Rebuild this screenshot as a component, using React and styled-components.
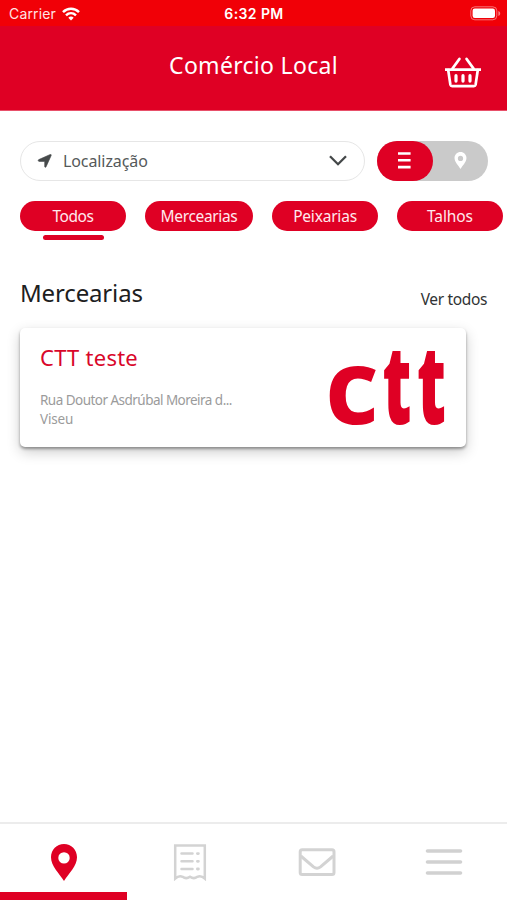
import React from 'react';
import styled, { createGlobalStyle } from 'styled-components';

const RED = '#df0024';

const categories = [
  { name: 'Todos', width: 106, spacing: '-0.4px', active: true },
  { name: 'Mercearias', width: 108, spacing: '-0.35px' },
  { name: 'Peixarias', width: 106, spacing: '-0.2px' },
  { name: 'Talhos', width: 106, spacing: '-0.1px' },
];

const WifiIcon = () => (
  <svg width="18" height="14" viewBox="0 0 18 14" fill="none" stroke="#fff" strokeWidth="2.5">
    <path d="M1 5.1C5.5.7 12.5.7 17 5.1" />
    <path d="M4 8.3c2.9-2.7 7.1-2.7 10 0" />
    <path d="M6.3 10.7c1.6-1.5 3.8-1.5 5.4 0L9 13.6z" fill="#fff" stroke="none" />
  </svg>
);

const BatteryIcon = () => (
  <svg width="31" height="15" viewBox="0 0 31 15">
    <rect x="0.8" y="0.8" width="26" height="13" rx="4" fill="none" stroke="#fff" strokeOpacity="0.45" />
    <rect x="2.6" y="2.6" width="22.4" height="9.4" rx="2.2" fill="#fff" />
    <path d="M28.4 5c2.4.8 2.4 4.2 0 5z" fill="#fff" fillOpacity="0.5" />
  </svg>
);

const BasketIcon = () => (
  <svg width="38" height="32" viewBox="0 0 38 32" fill="none" stroke="#fff" strokeLinecap="round">
    <path d="M1 12.6h36" strokeWidth="2.8" strokeLinecap="butt" />
    <path d="M4.2 13l2.2 14.8a1.8 1.8 0 0 0 1.8 1.4h21.6a1.8 1.8 0 0 0 1.8-1.4L33.8 13" strokeWidth="2.7" />
    <path d="M8.5 11.5L15.4 2M29.5 11.5L22.6 2" strokeWidth="2.8" />
    <path d="M12 18.7v5.4M19 18.7v5.4M26 18.7v5.4" strokeWidth="3.2" />
  </svg>
);

const ArrowIcon = () => (
  <svg width="15" height="14" viewBox="0 0 15 14">
    <path
      d="M13.2.5C13.9.2 14.5.7 14.2 1.4L9 12.9c-.4.7-1.3.5-1.3-.3V7.4H2.2C1 7.4.8 6.1 1.8 5.6z"
      fill="#464a4b"
      stroke="#464a4b"
      strokeWidth="0.6"
    />
  </svg>
);

const ChevronIcon = () => (
  <svg width="18" height="11" viewBox="0 0 18 11" fill="none" stroke="#444849" strokeWidth="2.3">
    <path d="M1 1.2l8 8 8-8" />
  </svg>
);

const ListIcon = () => (
  <svg width="13" height="17" viewBox="0 0 13 17" fill="none" stroke="#fff" strokeWidth="2.6">
    <path d="M0 1.5h12.6M0 8.3h12.6M0 15.1h12.6" />
  </svg>
);

const PinIcon = ({ width, height, color }) => (
  <svg width={width} height={height} viewBox="0 0 26 37">
    <path
      fill={color}
      fillRule="evenodd"
      d="M13 0C5.7 0 0 5.8 0 13.2 0 22 8.5 29.5 13 37c4.5-7.5 13-15 13-23.8C26 5.8 20.3 0 13 0zm0 8.2a5.7 5.7 0 1 1 0 11.4 5.7 5.7 0 0 1 0-11.4z"
    />
  </svg>
);

const ReceiptIcon = () => (
  <svg width="34" height="38" viewBox="0 0 34 38" fill="none" stroke="#d3d3d3" strokeWidth="2.5">
    <path d="M2.2 35.5V2.4h29.6v33.1q-3.8-3.4-7.5-1.7Q21 36.5 17 33.8 13 36.5 9.7 33.8q-3.7-1.7-7.5 1.7z" />
    <path d="M8.5 10.6h11M8.5 18.3h11M8.5 26h11" strokeLinecap="round" />
    <path d="M24.4 10.6h1M24.4 18.3h1M24.4 26h1" strokeLinecap="round" strokeWidth="2.8" />
  </svg>
);

const MailIcon = () => (
  <svg width="38" height="28" viewBox="0 0 38 28" fill="none" stroke="#d3d3d3" strokeWidth="3">
    <rect x="2.2" y="1.8" width="33.8" height="24.6" rx="2" />
    <path d="M2.8 8l12.7 10.9q3.5 2.8 7 0L35.2 8" />
  </svg>
);

const MenuIcon = () => (
  <svg width="38" height="28" viewBox="0 0 38 28" fill="none" stroke="#d1d1d1" strokeWidth="3.6" strokeLinecap="round">
    <path d="M2.5 3h33M2.5 14h33M2.5 25h33" />
  </svg>
);

// the t is much narrower than the c in this wordmark
const StoreLogo = () => (
  <LogoDrawing width="118" height="82" viewBox="0 0 118 82">
    <text y="78">
      <tspan x="-4" textLength="54" lengthAdjust="spacingAndGlyphs">c</tspan>
      <LogoNarrow x="53.5" textLength="29" lengthAdjust="spacingAndGlyphs">t</LogoNarrow>
      <LogoNarrow x="88" textLength="29" lengthAdjust="spacingAndGlyphs">t</LogoNarrow>
    </text>
  </LogoDrawing>
);

const App = () => {
  return (
    <Screen>
      <GlobalStyle />
      <StatusBar>
        <Carrier>Carrier <WifiIcon /></Carrier>
        <Clock>6:32 PM</Clock>
        <Battery><BatteryIcon /></Battery>
      </StatusBar>
      <Header>
        <HeaderTitle>Comércio Local</HeaderTitle>
        <BasketButton aria-label="Cesto"><BasketIcon /></BasketButton>
      </Header>

      <SearchRow>
        <LocationSelect>
          <ArrowIcon />
          <LocationLabel>Localização</LocationLabel>
          <ChevronIcon />
        </LocationSelect>
        <ViewToggle>
          <ToggleActive aria-label="Lista"><ListIcon /></ToggleActive>
          <ToggleOption aria-label="Mapa"><PinIcon width={13} height={17} color="#fff" /></ToggleOption>
        </ViewToggle>
      </SearchRow>

      <Categories>
        {categories.map((item) => (
          <Category key={item.name}>
            <Pill $width={item.width} $spacing={item.spacing}>{item.name}</Pill>
            {item.active && <Underline />}
          </Category>
        ))}
      </Categories>

      <SectionHeader>
        <SectionTitle>Mercearias</SectionTitle>
        <SeeAll>Ver todos</SeeAll>
      </SectionHeader>

      <StoreCard>
        <StoreInfo>
          <StoreName>CTT teste</StoreName>
          <Address>Rua Doutor Asdrúbal Moreira d...</Address>
          <City>Viseu</City>
        </StoreInfo>
        <StoreLogo />
      </StoreCard>

      <TabBar>
        <Tab $active aria-label="Locais"><PinIcon width={26} height={37} color={RED} /></Tab>
        <Tab aria-label="Encomendas"><ReceiptIcon /></Tab>
        <Tab aria-label="Mensagens"><MailIcon /></Tab>
        <Tab aria-label="Menu"><MenuIcon /></Tab>
      </TabBar>
    </Screen>
  );
};

export default App;

const GlobalStyle = createGlobalStyle`
  * {
    box-sizing: border-box;
  }

  body {
    margin: 0;
    background: #fff;
  }

  button {
    padding: 0;
    border: 0;
    background: none;
    font: inherit;
  }

  svg {
    display: block;
    flex: none;
  }
`;

const Screen = styled.div`
  display: flex;
  flex-direction: column;
  width: 507px;
  height: 900px;
  overflow: hidden;
  background: #fff;
  font-family: 'Noto Sans', sans-serif;
  white-space: nowrap;
`;

const StatusBar = styled.div`
  display: grid;
  grid-template-columns: 1fr auto 1fr;
  align-items: center;
  height: 26px;
  padding: 1px 6px 0 9px;
  background: #f10007;
  color: #fff;
  font-family: Inter, sans-serif;
  font-size: 14px;
`;

const Carrier = styled.div`
  display: flex;
  align-items: center;
  gap: 6px;
  color: #ffe4e4;
  letter-spacing: 0.15px;
`;

const Clock = styled.div`
  margin-right: 2px;
  font-weight: 600;
  letter-spacing: 0.4px;
`;

const Battery = styled.div`
  display: flex;
  justify-content: flex-end;
`;

const Header = styled.header`
  display: grid;
  grid-template-columns: 1fr auto 1fr;
  height: 85px;
  padding: 0 25px;
  background: ${RED};
  border-bottom: 1px solid #e8506a;
  color: #fff;
`;

const HeaderTitle = styled.h1`
  grid-column: 2;
  margin: 22px 0 0;
  font-size: 23px;
  font-weight: 400;
  line-height: 34px;
  letter-spacing: 0.3px;
`;

const BasketButton = styled.button`
  justify-self: end;
  align-self: start;
  margin-top: 31px;
`;

const SearchRow = styled.div`
  display: flex;
  gap: 12px;
  padding: 30px 19px 0 20px;
`;

const LocationSelect = styled.div`
  display: flex;
  align-items: center;
  width: 345px;
  height: 40px;
  padding: 0 17px 1px 16px;
  border: 1px solid #e6e6e6;
  border-radius: 20px;
`;

const LocationLabel = styled.span`
  flex: 1;
  margin: 1px 0 0 11px;
  color: #55595a;
  font-size: 16px;
  letter-spacing: -0.1px;
`;

const ViewToggle = styled.div`
  display: flex;
  width: 111px;
  height: 40px;
  border-radius: 20px;
  background: #cacaca;
`;

const ToggleOption = styled.button`
  display: flex;
  flex: 1;
  align-items: center;
  justify-content: center;
  padding-bottom: 2px;
`;

const ToggleActive = styled(ToggleOption)`
  border-radius: 20px;
  background: ${RED};
`;

const Categories = styled.div`
  display: flex;
  gap: 19px;
  height: 60px;
  padding: 20px 0 0 20px;
`;

const Category = styled.div`
  display: flex;
  flex: none;
  flex-direction: column;
  align-items: center;
`;

const Pill = styled.button`
  width: ${(props) => props.$width}px;
  height: 30px;
  border-radius: 15px;
  background: ${RED};
  color: #ffe9ed;
  font-size: 15.5px;
  line-height: 30px;
  letter-spacing: ${(props) => props.$spacing};
`;

const Underline = styled.div`
  width: 61px;
  height: 5px;
  margin-top: 4px;
  border-radius: 3px;
  background: ${RED};
`;

const SectionHeader = styled.div`
  display: flex;
  align-items: center;
  justify-content: space-between;
  padding: 34px 20px 0 20px;
`;

const SectionTitle = styled.h2`
  margin: 0;
  color: #1d2021;
  font-size: 24px;
  font-weight: 400;
  line-height: 36px;
  letter-spacing: -0.15px;
`;

const SeeAll = styled.a`
  padding-top: 11px;
  color: #303334;
  font-size: 15.5px;
  line-height: 24px;
  letter-spacing: -0.35px;
`;

const StoreCard = styled.div`
  display: flex;
  justify-content: space-between;
  width: 446px;
  height: 119px;
  margin: 17px 0 0 20px;
  padding: 13px 19px 0 20px;
  border-radius: 5px;
  background: #fff;
  box-shadow: 0 2px 3px rgba(0, 0, 0, 0.36), 0 5px 14px rgba(0, 0, 0, 0.2);
`;

const StoreInfo = styled.div`
  display: flex;
  flex-direction: column;
  color: #9b9b9b;
  font-size: 13.5px;
  line-height: 19px;
`;

const StoreName = styled.h3`
  margin: 0 0 18px;
  color: #d9062a;
  font-size: 22px;
  font-weight: 400;
  line-height: 32px;
  letter-spacing: 0.25px;
`;

const Address = styled.span`
  letter-spacing: -0.53px;
`;

const City = styled.span`
  letter-spacing: -0.15px;
`;

const LogoDrawing = styled.svg`
  overflow: visible;
  margin-top: 5px;
  fill: ${RED};
  font-family: 'Open Sans', 'Noto Sans', sans-serif;
  font-size: 104px;
  font-weight: 700;
`;

const LogoNarrow = styled.tspan`
  font-size: 110px;
  font-weight: 800;
`;

const TabBar = styled.nav`
  display: grid;
  grid-template-columns: repeat(4, 1fr);
  height: 78px;
  margin-top: auto;
  border-top: 2px solid #ececec;
`;

const Tab = styled.button`
  display: flex;
  align-items: center;
  justify-content: center;
  padding: ${(props) => (props.$active ? '8px 0 0 1px' : '0')};
  border-bottom: ${(props) => (props.$active ? `8px solid ${RED}` : 'none')};
`;
